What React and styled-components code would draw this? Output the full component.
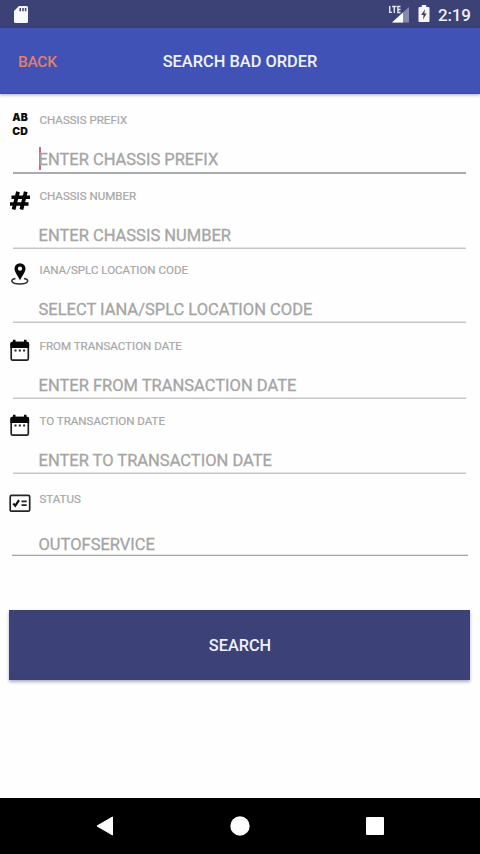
import React from "react";
import styled, { createGlobalStyle } from "styled-components";

const GlobalStyle = createGlobalStyle`
  * { box-sizing: border-box; }
  html, body { margin: 0; padding: 0; background: #fefefe; }
  svg { display: block; }
`;

const Screen = styled.div`
  width: 480px;
  height: 854px;
  display: flex;
  flex-direction: column;
  overflow: hidden;
  background: #fefefe;
  font-family: Roboto, sans-serif;
`;

const StatusBar = styled.div`
  height: 28px;
  flex: none;
  display: flex;
  align-items: center;
  justify-content: space-between;
  padding: 0 9px 0 14px;
  background: #3c4176;
`;

const StatusIcons = styled.div`
  display: flex;
  align-items: center;
`;

const Clock = styled.span`
  margin-left: 8px;
  padding-top: 2px;
  width: 33px;
  font-size: 17px;
  line-height: 26px;
  font-weight: 500;
  letter-spacing: -0.15px;
  color: #eef0fb;
`;

const Header = styled.header`
  height: 66px;
  flex: none;
  padding-top: 2px;
  display: grid;
  grid-template-columns: 100px 1fr 100px;
  align-items: center;
  background: #4052b5;
  border-bottom: 1px solid #3c4b9c;
  box-shadow: 0 1px 3px rgba(40, 50, 100, 0.4);
`;

const BackButton = styled.button`
  padding: 0 0 0 18px;
  border: 0;
  background: none;
  text-align: left;
  font: 500 15.5px/20px Roboto, sans-serif;
  letter-spacing: -0.3px;
  color: #e07f6c;
`;

const Title = styled.h1`
  margin: 0;
  text-align: center;
  font-size: 16.4px;
  line-height: 20px;
  font-weight: 500;
  white-space: nowrap;
  color: #eef3ff;
`;

const Form = styled.main`
  flex: 1;
  display: flex;
  flex-direction: column;
`;

const Field = styled.section`
  height: ${(p) => p.$height}px;
  flex: none;
  padding-top: ${(p) => p.$top}px;
  display: flex;
  flex-direction: column;
  justify-content: space-between;
`;

const FieldHead = styled.div`
  display: flex;
  align-items: flex-start;
`;

const IconSlot = styled.div`
  width: 39.5px;
  height: 28px;
  flex: none;
  padding: 0 0 0 8px;
`;

const Letters = styled.div`
  width: 24px;
  padding-top: 1px;
  text-align: center;
  font: 900 10.5px/13.5px Inter, sans-serif;
  color: #0c0c0c;
`;

const Label = styled.label`
  font-size: 11.55px;
  line-height: 20px;
  color: #a7a7a7;
  -webkit-text-stroke: 0.2px #a7a7a7;
`;

const ValueLine = styled.div`
  height: ${(p) => (p.$wide ? 23 : 26)}px;
  margin: 0 ${(p) => (p.$wide ? 12 : 14)}px 0 ${(p) => (p.$wide ? 12 : 13)}px;
  padding-left: ${(p) => (p.$wide ? 26.5 : 25.5)}px;
  display: flex;
  align-items: flex-start;
  border-bottom: ${(p) => (p.$focused ? 2 : 1)}px solid ${(p) => p.$line};
  box-shadow: ${(p) => (p.$focused ? "none" : "inset 0 -1px 0 #e4e4e4")};
`;

const Caret = styled.span`
  width: 2px;
  height: 23px;
  margin: -1px -2px 0 0;
  background: #cf6293;
`;

const Value = styled.span`
  padding-top: ${(p) => (p.$low ? 2 : 1)}px;
  font-size: 16.5px;
  line-height: 22px;
  white-space: nowrap;
  color: #a5a5a5;
  -webkit-text-stroke: 0.3px #a5a5a5;
`;

const SearchButton = styled.button`
  height: 70px;
  flex: none;
  margin: 54px 10px 0 9px;
  padding: 2px 0 0 1px;
  border: 1px solid #3b4168;
  background: #3c4177;
  box-shadow: 0 2px 3px rgba(60, 65, 120, 0.42);
  font: 500 16.3px/20px Roboto, sans-serif;
  color: #eef1ff;
`;

const NavBar = styled.nav`
  height: 56px;
  flex: none;
  display: grid;
  grid-template-columns: repeat(3, 135px);
  justify-content: center;
  align-items: center;
  justify-items: center;
  background: #000;
`;

const SdCard = () => (
  <svg width="15" height="19" viewBox="0 0 15 19">
    <path d="M5 1H12.5Q14 1 14 2.5V16.5Q14 18 12.5 18H1.5Q0 18 0 16.5V6Z" fill="#f8f9ff" />
    <path d="M6.2 3v3.2M9 3v3.2M11.6 3v3.2" stroke="#3c4176" strokeWidth="1.5" />
  </svg>
);

const Signal = () => (
  <svg width="23" height="20" viewBox="0 0 23 20">
    <path d="M21 3V18.5H4Z" fill="#858aad" />
    <path d="M15 8.5V18.5H4Z" fill="#fff" />
    <path d="M1.7 2v6.4h2.3M4.1 2.5h4.4M6.3 2.5v6.5M12.5 2.5H9.9V8.5H12.5M9.9 5.5H12.5" stroke="#e7e9f6" strokeWidth="1.4" fill="none" />
  </svg>
);

const Battery = () => (
  <svg width="12" height="18" viewBox="0 0 12 18">
    <path d="M3.8 0H8.2V2H10.5Q11.5 2 11.5 3V16Q11.5 17 10.5 17H1.5Q.5 17 .5 16V3Q.5 2 1.5 2H3.8Z" fill="#f5f6f8" />
    <path d="M7 4.2L3.2 10H5.6L5 14.5L8.7 8.5H6.4Z" fill="#3d4058" />
  </svg>
);

const Hash = () => (
  <svg width="24" height="28" viewBox="0 0 24 28">
    <path d="M10 5.8L5.6 23.5M17.8 5.8L13.4 23.5" stroke="#050505" strokeWidth="3.8" />
    <path d="M3.5 11.2H22M2 18H20.5" stroke="#050505" strokeWidth="3.4" />
  </svg>
);

const Pin = () => (
  <svg width="24" height="28" viewBox="0 0 24 28">
    <path d="M7.5 18.4C2 19.4 2 23.8 11.8 24C21.5 23.8 21.5 19.4 16 18.4" fill="none" stroke="#303030" strokeWidth="1.5" />
    <path d="M12 3.2A5.5 5.5 0 0 0 6.5 8.7C6.5 12.2 10.6 16.7 12 20.2C13.4 16.7 17.5 12.2 17.5 8.7A5.5 5.5 0 0 0 12 3.2Z" fill="#080808" />
    <circle cx="12" cy="8.7" r="2.1" fill="#fefefe" />
  </svg>
);

const Calendar = () => (
  <svg width="24" height="28" viewBox="0 -0.6 24 28">
    <rect x="3.2" y="6" width="17.1" height="17.6" rx="1.5" fill="none" stroke="#202020" strokeWidth="1.7" />
    <path d="M2.4 11.3V7Q2.4 5.2 4.2 5.2H5V3.2H7.5V5.2H16V3.2H18.5V5.2H19.3Q21.1 5.2 21.1 7V11.3Z" fill="#080808" />
    <path d="M6.5 13.9h2M10.8 13.9h2M15.1 13.9h2" stroke="#202020" strokeWidth="2" />
  </svg>
);

const Checklist = () => (
  <svg width="24" height="28" viewBox="0 0 24 28">
    <rect x="2.2" y="6.4" width="19.5" height="15.8" rx="1.3" fill="none" stroke="#262626" strokeWidth="1.7" />
    <path d="M5.3 14.6L7.3 16.8L11 11.2" fill="none" stroke="#111" strokeWidth="2.2" />
    <path d="M13.5 12.4H18.7M13.5 16.2H18.7" stroke="#222" strokeWidth="1.8" />
  </svg>
);

const FIELDS = [
  { label: "CHASSIS PREFIX", value: "ENTER CHASSIS PREFIX", icon: <Letters>AB<br />CD</Letters>, height: 80, top: 16, focused: true, line: "#a9acac" },
  { label: "CHASSIS NUMBER", value: "ENTER CHASSIS NUMBER", icon: <Hash />, height: 75, top: 12, line: "#c6c6c6" },
  { label: "IANA/SPLC LOCATION CODE", value: "SELECT IANA/SPLC LOCATION CODE", icon: <Pin />, height: 74, top: 11, line: "#c6c6c6" },
  { label: "FROM TRANSACTION DATE", value: "ENTER FROM TRANSACTION DATE", icon: <Calendar />, height: 76, top: 13, line: "#c6c6c6" },
  { label: "TO TRANSACTION DATE", value: "ENTER TO TRANSACTION DATE", icon: <Calendar />, height: 75, top: 12, line: "#c6c6c6" },
  { label: "STATUS", value: "OUTOFSERVICE", icon: <Checklist />, height: 82, top: 15, wide: true, line: "#a8a8a8" },
];

export default function App() {
  return (
    <>
      <GlobalStyle />
      <Screen>
        <StatusBar>
          <SdCard />
          <StatusIcons>
            <Signal />
            <svg width="7" height="1" />
            <Battery />
            <Clock>2:19</Clock>
          </StatusIcons>
        </StatusBar>
        <Header>
          <BackButton>BACK</BackButton>
          <Title>SEARCH BAD ORDER</Title>
        </Header>
        <Form>
          {FIELDS.map((f) => (
            <Field key={f.label} $height={f.height} $top={f.top}>
              <FieldHead>
                <IconSlot>{f.icon}</IconSlot>
                <Label>{f.label}</Label>
              </FieldHead>
              <ValueLine $focused={f.focused} $wide={f.wide} $line={f.line}>
                {f.focused && <Caret />}
                <Value $low={!f.focused && !f.wide}>{f.value}</Value>
              </ValueLine>
            </Field>
          ))}
          <SearchButton>SEARCH</SearchButton>
        </Form>
        <NavBar>
          <svg width="20" height="22" viewBox="0 0 20 22">
            <path d="M2 11L17.5 2V20Z" fill="#fff" stroke="#fff" strokeWidth="1" strokeLinejoin="round" />
          </svg>
          <svg width="20" height="20" viewBox="0 0 20 20">
            <circle cx="10" cy="10" r="9.7" fill="#fff" />
          </svg>
          <svg width="18" height="18" viewBox="0 0 18 18">
            <rect width="18" height="18" rx="1" fill="#fff" />
          </svg>
        </NavBar>
      </Screen>
    </>
  );
}
